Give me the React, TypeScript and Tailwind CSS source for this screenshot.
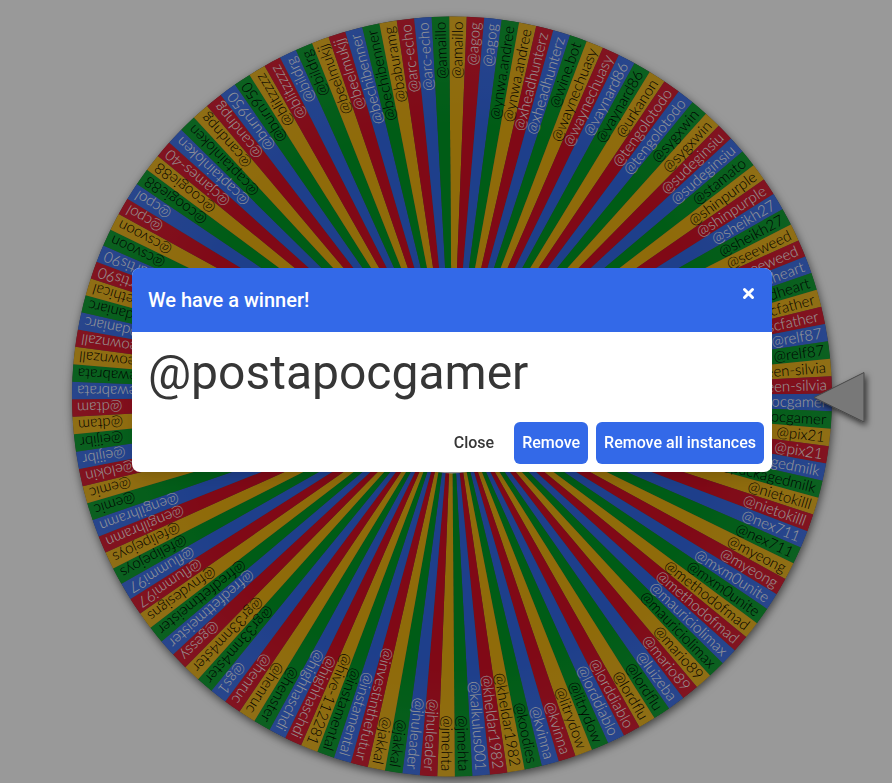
import * as React from "react";
import { useState } from "react";

const colors = ["#eeb211", "#d50f25", "#3369e8", "#009925"];
const textColors = ["#000000", "#ffffff", "#ffffff", "#000000"];

// clockwise, starting at the top of the wheel
const entries = [
  "amaillo", "agog", "agog", "ynwa.andree", "ynwa.andree", "xheadhunterz", "xheadhunterz", "wine.bot",
  "waynechuasy", "waynechuasy", "vaynard86", "vaynard86", "urkanon", "tengolotodo", "tengolotodo", "sygxwin",
  "sygxwin", "sudeginsiu", "sudeginsiu", "stamato", "shinpurple", "shinpurple", "sheikh27", "sheikh27",
  "seeweed", "seeweed", "scaredheart", "scaredheart", "scfather", "scfather", "relf87", "relf87",
  "queen-silvia", "queen-silvia", "postapocgamer", "postapocgamer", "pix21", "pix21", "packagedmilk", "packagedmilk",
  "nietokilll", "nietokilll", "nex711", "nex711", "myeong", "myeong", "mxm0unite", "mxm0unite",
  "methodofmad", "methodofmad", "mauriciolimax", "mauriciolimax", "mario89", "mario89", "luizeba", "lordflu",
  "lordflu", "lorddiablo", "lorddiablo", "litrydow", "litrydow", "kvinna", "kvinna", "koodies",
  "kheldar1982", "kheldar1982", "kalkulus001", "jmehta", "jmehta", "jhuleader", "jhuleader", "jakkal",
  "jakkal", "investinthefutur", "instamental", "instamental", "hive-112281", "highhaschdi", "highhaschdi", "henster",
  "henruc", "henruc", "gs1", "gr33nm4ster", "gr33nm4ster", "gessy", "fredfettmeister", "fredfettmeister",
  "fnvdesigns", "flummi97", "flummi97", "felipejoys", "felipejoys", "engilhramn", "engilhramn", "emic",
  "emic", "elokin", "eijibr", "eijibr", "dtam", "dtam", "drewabrata", "drewabrata",
  "deownzall", "deownzall", "daniarc", "daniarc", "cyethical", "curtis90", "curtis90", "csvoon",
  "csvoon", "cpol", "cpol", "coogie88", "coogie88", "cjames-40", "captainloken", "captainloken",
  "candnpg", "candnpg", "burn950", "burn950", "blitzzzz", "blitzzzz", "bildrg", "bildrg",
  "beelmukjj", "beelmukjj", "bechibenner", "bechibenner", "baburamg", "arc-echo", "arc-echo", "amaillo",
];

const CX = 452;
const CY = 396.5;
const R = 380;
const STEP = 360 / entries.length;
const OFFSET = 0.9;

function point(deg: number) {
  const rad = (deg * Math.PI) / 180;
  return `${(CX + R * Math.cos(rad)).toFixed(2)} ${(CY + R * Math.sin(rad)).toFixed(2)}`;
}

function Wheel() {
  return (
    <svg viewBox="0 0 892 783" className="block w-full h-auto" role="img" aria-label="Wheel of names">
      <defs>
        <filter id="wheelShadow" x="-10%" y="-10%" width="120%" height="120%">
          <feDropShadow dx="1" dy="3" stdDeviation="5" floodColor="#000" floodOpacity="0.6" />
        </filter>
        <filter id="pointerShadow" x="-30%" y="-30%" width="160%" height="160%">
          <feDropShadow dx="2" dy="3" stdDeviation="3" floodColor="#000" floodOpacity="0.7" />
        </filter>
        <radialGradient id="rim" gradientUnits="userSpaceOnUse" cx={CX} cy={CY} r={R}>
          <stop offset="0.7" stopColor="#fff" stopOpacity="0" />
          <stop offset="1" stopColor="#fff" stopOpacity="0.08" />
        </radialGradient>
      </defs>
      <circle cx={CX} cy={CY} r={R} fill="#555" filter="url(#wheelShadow)" />
      {entries.map((_, i) => {
        const mid = i * STEP + OFFSET - 90;
        return (
          <path
            key={i}
            d={`M${CX} ${CY}L${point(mid - STEP / 2)}A${R} ${R} 0 0 1 ${point(mid + STEP / 2)}Z`}
            fill={colors[i % 4]}
          />
        );
      })}
      <circle cx={CX} cy={CY} r={R} fill="url(#rim)" />
      <circle cx={CX} cy={CY} r={77} fill="#fff" />
      <g className="text-[15px] font-light font-['Lato',sans-serif]" textAnchor="end">
        {entries.map((name, i) => (
          <text
            key={i}
            transform={`translate(${CX} ${CY}) rotate(${i * STEP + OFFSET - 90})`}
            x={R - 5}
            y={5}
            fill={textColors[i % 4]}
          >
            @{name}
          </text>
        ))}
      </g>
      <path
        d="M814 397.500L864 372.500V422Z"
        fill="#c8c8c8"
        stroke="#777777"
        strokeWidth="1"
        filter="url(#pointerShadow)"
      />
    </svg>
  );
}

export default function App() {
  const [open, setOpen] = useState(true);
  const close = () => setOpen(false);

  return (
    <main className="relative min-h-screen overflow-hidden bg-white font-['Roboto',sans-serif]">
      <Wheel />

      {open && (
        <div className="fixed inset-0 flex items-center justify-center bg-black/40 pr-4 pb-[43px] pl-7">
          <div
            className="w-[640px] max-w-full overflow-hidden rounded-lg bg-white text-[#363636] shadow-lg"
            role="dialog"
            aria-labelledby="winner-title"
          >
            <header className="flex h-16 items-start justify-between bg-[#3369e8] px-4 text-white">
              <h1 id="winner-title" className="self-center text-xl font-medium">
                We have a winner!
              </h1>
              <button onClick={close} aria-label="Dismiss" className="mt-[18px] cursor-pointer">
                <svg width="15" height="15" viewBox="0 0 15 15" fill="none" stroke="currentColor" strokeWidth="3" strokeLinecap="round">
                  <path d="M3.500 3.500L11.500 11.500M11.500 3.500L3.500 11.500" />
                </svg>
              </button>
            </header>
            <p className="px-4 pt-4 text-5xl leading-[50px]">@postapocgamer</p>
            <footer className="flex flex-wrap justify-end gap-2 p-2 pt-6 font-medium">
              <button onClick={close} className="h-[42px] cursor-pointer px-3">
                Close
              </button>
              <button onClick={close} className="h-[42px] cursor-pointer rounded-md bg-[#3369e8] px-2 text-white">
                Remove
              </button>
              <button onClick={close} className="h-[42px] cursor-pointer rounded-md bg-[#3369e8] px-2 text-white">
                Remove all instances
              </button>
            </footer>
          </div>
        </div>
      )}
    </main>
  );
}
